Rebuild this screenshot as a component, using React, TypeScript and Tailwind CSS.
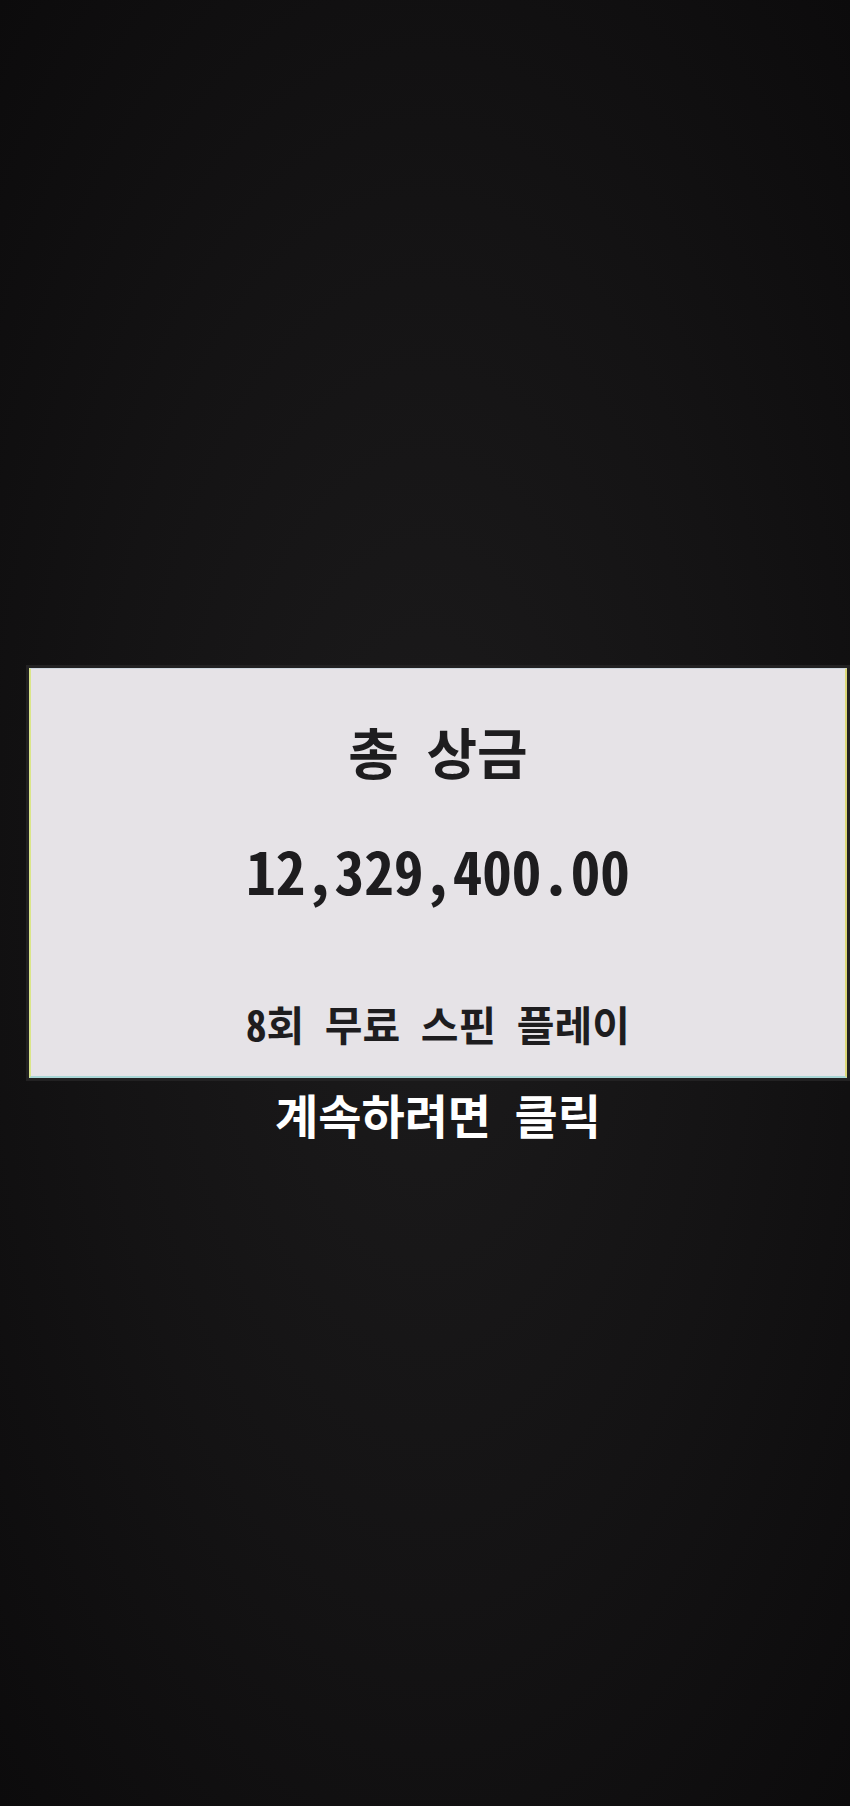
import React from "react";

const FONT = {
  fontFamily: '"Noto Sans Mono CJK KR", "Noto Sans CJK KR", "Noto Sans", sans-serif',
};

export default function App() {
  return (
    <div
      className="flex h-[1806px] w-full flex-col bg-[radial-gradient(ellipse_at_center,#1c1b1c_0%,#141314_55%,#0c0b0c_100%)] pl-[29px] pr-[3px] pt-[668px]"
      style={FONT}
    >
      {/* Prize card */}
      <div className="flex h-[410px] flex-col items-center border-b-2 border-l-2 border-r-2 border-t border-b-[#a9d6d6] border-l-[#dbe68a] border-r-[#ddd878] border-t-[#cdd6de] bg-[#e6e3e7] text-[#1e1d1f] shadow-[0_0_0_3px_#222122]">
        <div className="mt-[54px] text-[55px] font-bold leading-none">총 상금</div>
        <div className="mt-[62px] text-[59px] font-bold leading-none">12,329,400.00</div>
        <div className="mt-[104px] text-[41px] font-bold leading-none">8회 무료 스핀 플레이</div>
      </div>

      <div className="mt-[12px] text-center text-[47px] font-bold leading-none text-white">계속하려면 클릭</div>
    </div>
  );
}
